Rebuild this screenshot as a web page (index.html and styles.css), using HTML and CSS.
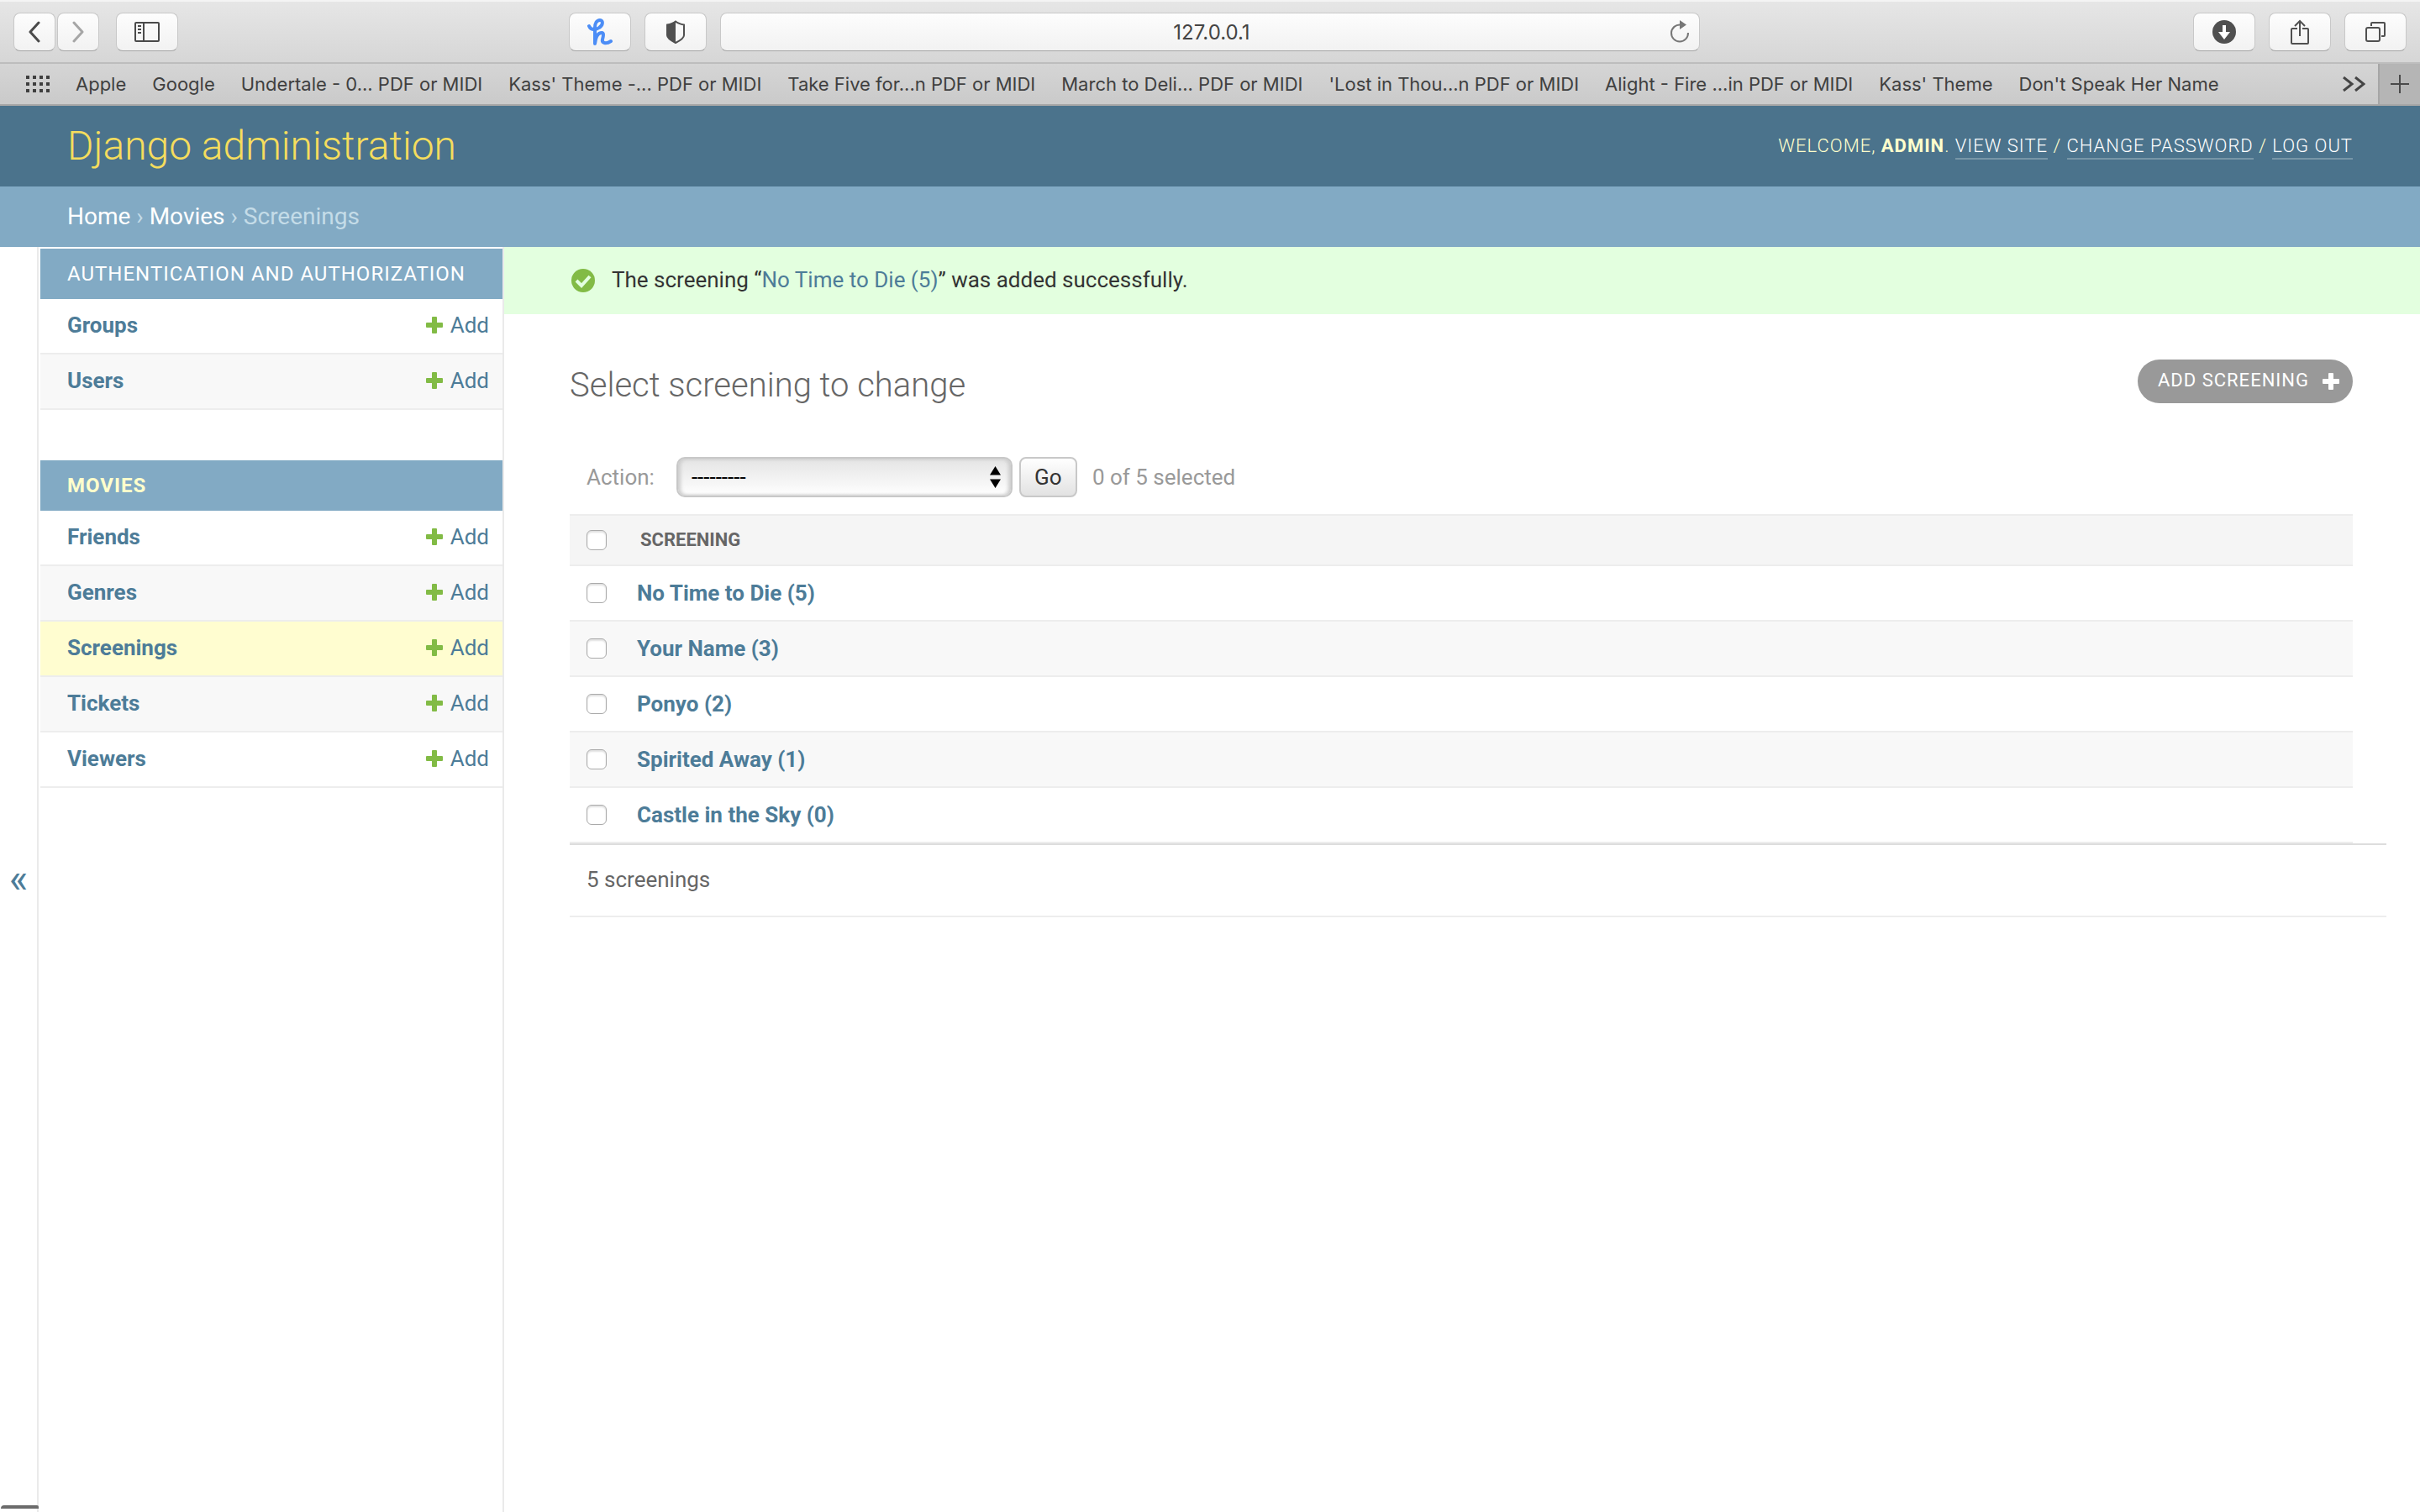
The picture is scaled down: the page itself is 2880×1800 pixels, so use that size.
FILE: index.html
```html
<!DOCTYPE html>
<html lang="en">
<head>
<meta charset="utf-8">
<title>Select screening to change | Django site admin</title>
<link rel="stylesheet" href="styles.css">
</head>
<body>
<svg class="sprite" aria-hidden="true">
  <symbol id="plus" viewBox="0 0 20 20"><path d="M8 0h4q1 0 1 1v6h6q1 0 1 1v4q0 1-1 1h-6v6q0 1-1 1H8q-1 0-1-1v-6H1q-1 0-1-1V8q0-1 1-1h6V1q0-1 1-1z" fill="currentColor"/></symbol>
</svg>

<div class="toolbar">
  <div class="tools tools-left">
    <div class="history">
      <button class="tool tool-nav" type="button" aria-label="Back"><svg width="14" height="26" viewBox="0 0 14 26"><path d="M12 2 2 13l10 11" fill="none" stroke="#4a4a4a" stroke-width="3" stroke-linecap="round" stroke-linejoin="round"/></svg></button>
      <button class="tool tool-nav" type="button" aria-label="Forward"><svg width="14" height="26" viewBox="0 0 14 26"><path d="M2 2l10 11L2 24" fill="none" stroke="#a6a6a6" stroke-width="3" stroke-linecap="round" stroke-linejoin="round"/></svg></button>
    </div>
    <button class="tool" type="button" aria-label="Show sidebar"><svg width="30" height="24" viewBox="0 0 30 24" fill="none" stroke="#4a4a4a" stroke-width="2"><rect x="1" y="1" width="28" height="22" rx="1"/><path d="M11 1v22M4 5h4M4 9h4M4 13h4"/></svg></button>
  </div>
  <div class="tools tools-middle">
    <button class="tool" type="button" aria-label="Honey"><svg width="30" height="32" viewBox="0 0 30 32"><path d="M2 9c2 5 8 5 12 2 5-3 5-9 1-9-4 0-6 4-6 9v19c1-8 4-13 8-13 3 0 2 4 1 8-1 4 4 6 10 2" fill="none" stroke="#4c8df6" stroke-width="4" stroke-linecap="round" stroke-linejoin="round"/></svg></button>
    <button class="tool" type="button" aria-label="Privacy report"><svg width="24" height="28" viewBox="0 0 24 28"><path d="M12 1.500C9 4 5 5 2 5.500V18c0 4 6 7 10 9 4-2 10-5 10-9V5.500C19 5 15 4 12 1.500z" fill="none" stroke="#505050" stroke-width="2"/><path d="M12 1C9 4 5 5 2 5.500V18c0 4 6 7 10 9z" fill="#505050"/></svg></button>
    <div class="address">
      <input class="address-field" type="text" value="127.0.0.1" aria-label="Address">
      <button class="reload" type="button" aria-label="Reload"><svg width="26" height="28" viewBox="0 0 26 28"><path d="M14 5.500A10 10 0 1 0 23 15" fill="none" stroke="#777" stroke-width="2"/><path d="M13 0l8 5.500-8 5.500z" fill="#777"/></svg></button>
    </div>
  </div>
  <div class="tools tools-right">
    <button class="tool" type="button" aria-label="Downloads"><svg width="28" height="28" viewBox="0 0 28 28"><circle cx="14" cy="14" r="14" fill="#505050"/><path d="M12 6h4v8h5l-7 9-7-9h5z" fill="#fff"/></svg></button>
    <button class="tool" type="button" aria-label="Share"><svg width="22" height="30" viewBox="0 0 22 30" fill="none" stroke="#505050" stroke-width="2"><path d="M8 11H2q-1 0-1 1v16q0 1 1 1h18q1 0 1-1V12q0-1-1-1h-6M11 20V2M5 8l6-6 6 6"/></svg></button>
    <button class="tool" type="button" aria-label="Tab overview"><svg width="24" height="24" viewBox="0 0 24 24" fill="none" stroke="#505050" stroke-width="2"><rect x="1" y="7" width="16" height="16" rx="2"/><path d="M7 5V2q0-1 1-1h14q1 0 1 1v14q0 1-1 1h-3"/></svg></button>
  </div>
</div>

<nav class="favorites" aria-label="Favorites">
  <button class="plain grid-button" type="button" aria-label="Show top sites"><svg width="28" height="20" viewBox="0 0 28 20"><path d="M0 2h28M0 10h28M0 18h28" stroke="#3f3f3f" stroke-width="4" stroke-dasharray="4 4"/></svg></button>
  <a href="#">Apple</a>
  <a href="#">Google</a>
  <a href="#">Undertale - 0... PDF or MIDI</a>
  <a href="#">Kass' Theme -... PDF or MIDI</a>
  <a href="#">Take Five for...n PDF or MIDI</a>
  <a href="#">March to Deli... PDF or MIDI</a>
  <a href="#">'Lost in Thou...n PDF or MIDI</a>
  <a href="#">Alight - Fire ...in PDF or MIDI</a>
  <a href="#">Kass' Theme</a>
  <a href="#">Don't Speak Her Name</a>
  <button class="plain more" type="button" aria-label="More favorites"><svg width="28" height="18" viewBox="0 0 28 18"><path d="M2 1l10 8-10 8M16 1l10 8-10 8" fill="none" stroke="#444" stroke-width="3"/></svg></button>
  <button class="plain new-tab" type="button" aria-label="New tab"><svg width="22" height="22" viewBox="0 0 22 22"><path d="M11 0v22M0 11h22" stroke="#4a4a4a" stroke-width="2"/></svg></button>
</nav>

<header class="header">
  <a class="brand" href="#">Django administration</a>
  <div class="user-tools">Welcome, <strong>admin</strong>. <a href="#">View site</a> / <a href="#">Change password</a> / <a href="#">Log out</a></div>
</header>

<nav class="breadcrumbs" aria-label="Breadcrumbs"><a href="#">Home</a> › <a href="#">Movies</a> › Screenings</nav>

<div class="main">
  <button class="plain toggle" type="button" aria-label="Toggle navigation">«</button>
  <nav class="sidebar" aria-label="Sidebar">
    <table class="module">
      <caption><a href="#">Authentication and Authorization</a></caption>
      <tr><th scope="row"><a href="#">Groups</a></th><td><a class="add" href="#"><svg><use href="#plus"/></svg>Add</a></td></tr>
      <tr><th scope="row"><a href="#">Users</a></th><td><a class="add" href="#"><svg><use href="#plus"/></svg>Add</a></td></tr>
    </table>
    <table class="module">
      <caption class="current-app"><a href="#">Movies</a></caption>
      <tr><th scope="row"><a href="#">Friends</a></th><td><a class="add" href="#"><svg><use href="#plus"/></svg>Add</a></td></tr>
      <tr><th scope="row"><a href="#">Genres</a></th><td><a class="add" href="#"><svg><use href="#plus"/></svg>Add</a></td></tr>
      <tr class="current-model"><th scope="row"><a href="#">Screenings</a></th><td><a class="add" href="#"><svg><use href="#plus"/></svg>Add</a></td></tr>
      <tr><th scope="row"><a href="#">Tickets</a></th><td><a class="add" href="#"><svg><use href="#plus"/></svg>Add</a></td></tr>
      <tr><th scope="row"><a href="#">Viewers</a></th><td><a class="add" href="#"><svg><use href="#plus"/></svg>Add</a></td></tr>
    </table>
  </nav>
  <main class="content">
    <div class="message">
      <svg width="28" height="28" viewBox="0 0 28 28"><circle cx="14" cy="14" r="14" fill="#82bb45"/><path d="M6 14l6 6 10-11" fill="none" stroke="#e3ffdf" stroke-width="4"/></svg>
      <p>The screening “<a href="#">No Time to Die (5)</a>” was added successfully.</p>
    </div>
    <div class="title-row">
      <h1>Select screening to change</h1>
      <a class="add-button" href="#"><span>Add screening</span><svg><use href="#plus"/></svg></a>
    </div>
    <form class="changelist">
      <div class="actions">
        <label for="action">Action:</label>
        <span class="select-wrap">
          <select id="action"><option>---------</option></select>
          <svg class="arrows" width="13" height="26" viewBox="0 0 13 26"><path d="M0 10.500 6.500 0 13 10.500zM0 15.500h13L6.500 26z"/></svg>
        </span>
        <button class="go" type="submit">Go</button>
        <span>0 of 5 selected</span>
      </div>
      <table class="results">
        <thead><tr><td><input type="checkbox" aria-label="Select all"></td><th scope="col">Screening</th></tr></thead>
        <tbody>
          <tr><td><input type="checkbox" aria-label="Select No Time to Die"></td><th scope="row"><a href="#">No Time to Die (5)</a></th></tr>
          <tr><td><input type="checkbox" aria-label="Select Your Name"></td><th scope="row"><a href="#">Your Name (3)</a></th></tr>
          <tr><td><input type="checkbox" aria-label="Select Ponyo"></td><th scope="row"><a href="#">Ponyo (2)</a></th></tr>
          <tr><td><input type="checkbox" aria-label="Select Spirited Away"></td><th scope="row"><a href="#">Spirited Away (1)</a></th></tr>
          <tr><td><input type="checkbox" aria-label="Select Castle in the Sky"></td><th scope="row"><a href="#">Castle in the Sky (0)</a></th></tr>
        </tbody>
      </table>
      <p class="paginator">5 screenings</p>
    </form>
  </main>
</div>
<div class="status-edge"></div>
</body>
</html>
```
FILE: styles.css
```css
* { box-sizing: border-box; }

body {
  margin: 0;
  min-height: 100vh;
  display: flex;
  flex-direction: column;
  background: #fff;
  color: #333;
  font: 26px/32px Roboto, sans-serif;
}

a { color: #4d7c98; text-decoration: none; }
button, input, select { font: inherit; color: inherit; }
h1, p { margin: 0; }
svg { display: block; flex: none; }
.sprite { position: absolute; width: 0; height: 0; }
.plain { border: 0; padding: 0; background: none; }

/* Browser toolbar */
.toolbar {
  display: grid;
  grid-template-columns: 1fr auto 1fr;
  align-items: center;
  height: 76px;
  padding: 0 16px;
  border-top: 2px solid #f4f4f4;
  border-bottom: 2px solid #bdbdbd;
  background: linear-gradient(#e6e6e6, #d6d6d6);
}
.tools { display: flex; gap: 16px; }
.tools-left { gap: 20px; }
.tools-middle { padding-right: 180px; }
.tools-right { justify-content: flex-end; }
.history { display: flex; gap: 2px; }
.tool {
  display: flex;
  align-items: center;
  justify-content: center;
  width: 74px;
  height: 46px;
  padding: 0;
  border: 1px solid #c8c8c8;
  border-bottom-color: #a4a4a4;
  border-radius: 8px;
  background: linear-gradient(#fdfdfd, #f2f2f2);
}
.tool-nav { width: 50px; }
.address {
  display: flex;
  align-items: center;
  width: 40.5vw;
  height: 46px;
  padding: 0 10px 0 40px;
  border: 1px solid #c8c8c8;
  border-bottom-color: #a4a4a4;
  border-radius: 8px;
  background: linear-gradient(#fdfdfd, #f2f2f2);
}
.address-field {
  flex: 1;
  min-width: 0;
  padding: 2px 0 0;
  border: 0;
  background: none;
  color: #444;
  font: 24px/32px Inter, sans-serif;
  text-align: center;
}
.reload { border: 0; padding: 0; background: none; }

.favorites {
  display: flex;
  align-items: center;
  gap: 31px;
  height: 50px;
  padding-left: 31px;
  border-bottom: 2px solid #a6a6a6;
  background: linear-gradient(#d5d5d5, #cacaca);
  font: 22px/28px Inter, sans-serif;
  white-space: nowrap;
}
.favorites a { color: #404040; }
.more { margin-left: auto; }
.new-tab {
  display: flex;
  align-items: center;
  justify-content: center;
  align-self: stretch;
  width: 50px;
  margin-left: -16px;
  border-left: 2px solid #a6a6a6;
  background: #b5b5b5;
}

/* Site header */
.header {
  display: flex;
  align-items: center;
  justify-content: space-between;
  height: 96px;
  padding: 0 80px;
  background: #4b738c;
  color: #ffc;
}
.brand { color: #f5dd5d; font-size: 48px; line-height: 56px; font-weight: 300; }
.user-tools {
  font-size: 22px;
  line-height: 28px;
  font-weight: 300;
  letter-spacing: 1px;
  text-transform: uppercase;
}
.user-tools strong { font-weight: 700; }
.user-tools a { padding-bottom: 2px; color: #fff; border-bottom: 2px solid #7896a8; }

.breadcrumbs {
  padding: 20px 80px;
  background: #82aac4;
  color: #c4dce8;
  font-size: 28px;
}
.breadcrumbs a { color: #fff; }

/* Sidebar */
.main { display: flex; flex: 1; }
.toggle {
  width: 46px;
  border-right: 2px solid #eaeaea;
  color: #4d7c98;
  font-size: 48px;
}
.sidebar {
  width: 554px;
  padding: 2px 0 0 2px;
  border-right: 2px solid #eaeaea;
}
.module {
  width: 100%;
  margin-bottom: 60px;
  border-collapse: separate;
  border-spacing: 0;
}
.module caption {
  height: 60px;
  padding: 14px 32px;
  background: #82aac4;
  font-size: 24px;
  letter-spacing: 1px;
  text-align: left;
  text-transform: uppercase;
  white-space: nowrap;
}
.module caption a { color: #fff; }
.module .current-app a { color: #ffc; font-weight: 700; }
.module th, .module td { height: 66px; padding: 0 16px 2px 32px; border-bottom: 2px solid #ededed; }
.module th { text-align: left; }
.module tr:nth-child(even) { background: #f8f8f8; }
.module .current-model { background: #fffdd0; }
.add { display: flex; align-items: center; justify-content: flex-end; gap: 9px; }
.add svg { width: 20px; height: 20px; color: #82bb45; }

/* Content */
.content { flex: 1; min-width: 0; }
.message {
  display: flex;
  align-items: center;
  gap: 20px;
  height: 80px;
  padding: 0 80px;
  background: #e3ffdf;
}
.message p { padding-bottom: 2px; }
.title-row {
  display: flex;
  align-items: flex-start;
  justify-content: space-between;
  padding: 54px 80px 0 78px;
}
h1 { padding-top: 7px; color: #666; font-size: 40px; line-height: 48px; font-weight: 300; }
.add-button {
  display: flex;
  align-items: center;
  gap: 16px;
  height: 52px;
  padding: 0 16px 0 24px;
  border-radius: 26px;
  background: #999;
  color: #fff;
  font-size: 22px;
  letter-spacing: 1px;
  text-transform: uppercase;
}
.add-button span { padding-bottom: 2px; }
.add-button svg { width: 20px; height: 20px; }

.changelist { padding: 61px 80px 0 78px; }
.actions {
  display: flex;
  align-items: center;
  height: 48px;
  margin-bottom: 20px;
  padding-left: 20px;
  color: #999;
}
.select-wrap { position: relative; margin: 0 8px 0 26px; }
.arrows { position: absolute; top: 11px; right: 14px; fill: #000; pointer-events: none; }
select {
  appearance: none;
  display: block;
  width: 400px;
  height: 48px;
  padding: 0 16px;
  border: 2px solid #c8c8c8;
  border-radius: 10px;
  background: linear-gradient(#e4e4e4, #fff);
  box-shadow: inset 3px 0 4px #ccc, inset -3px 0 4px #ccc;
  color: #000;
}
.go {
  width: 69px;
  height: 48px;
  margin-right: 18px;
  padding: 0;
  border: 2px solid #c8c8c8;
  border-radius: 8px;
  background: linear-gradient(#fff, #e2e2e2);
  color: #333;
}
.results { width: 100%; border-collapse: separate; border-spacing: 0; }
.results th, .results td { height: 66px; padding: 0; border-bottom: 2px solid #ededed; text-align: left; }
.results td { width: 80px; padding: 0 0 0 20px; }
.results thead th, .results thead td {
  height: 62px;
  border-top: 2px solid #ededed;
  background: #f5f5f5;
}
.results thead th { padding-left: 4px; color: #666; font-size: 22px; text-transform: uppercase; }
.results tbody tr:nth-child(even) { background: #f8f8f8; }
input[type="checkbox"] {
  appearance: none;
  display: block;
  width: 24px;
  height: 24px;
  margin: 0;
  border: 1px solid #aaa;
  border-radius: 6px;
  background: #fff;
  box-shadow: inset 0 2px 2px #e0e0e0;
}
.paginator {
  margin-right: -40px;
  padding: 25px 20px 27px;
  border-top: 2px solid #ddd;
  border-bottom: 2px solid #ededed;
  color: #666;
}

/* Edge of the status bar, over the bottom left corner */
.status-edge {
  position: fixed;
  bottom: 4px;
  left: 1px;
  width: 45px;
  height: 4px;
  border-radius: 4px 2px 0 0;
  background: #6b6b6b;
}
```
